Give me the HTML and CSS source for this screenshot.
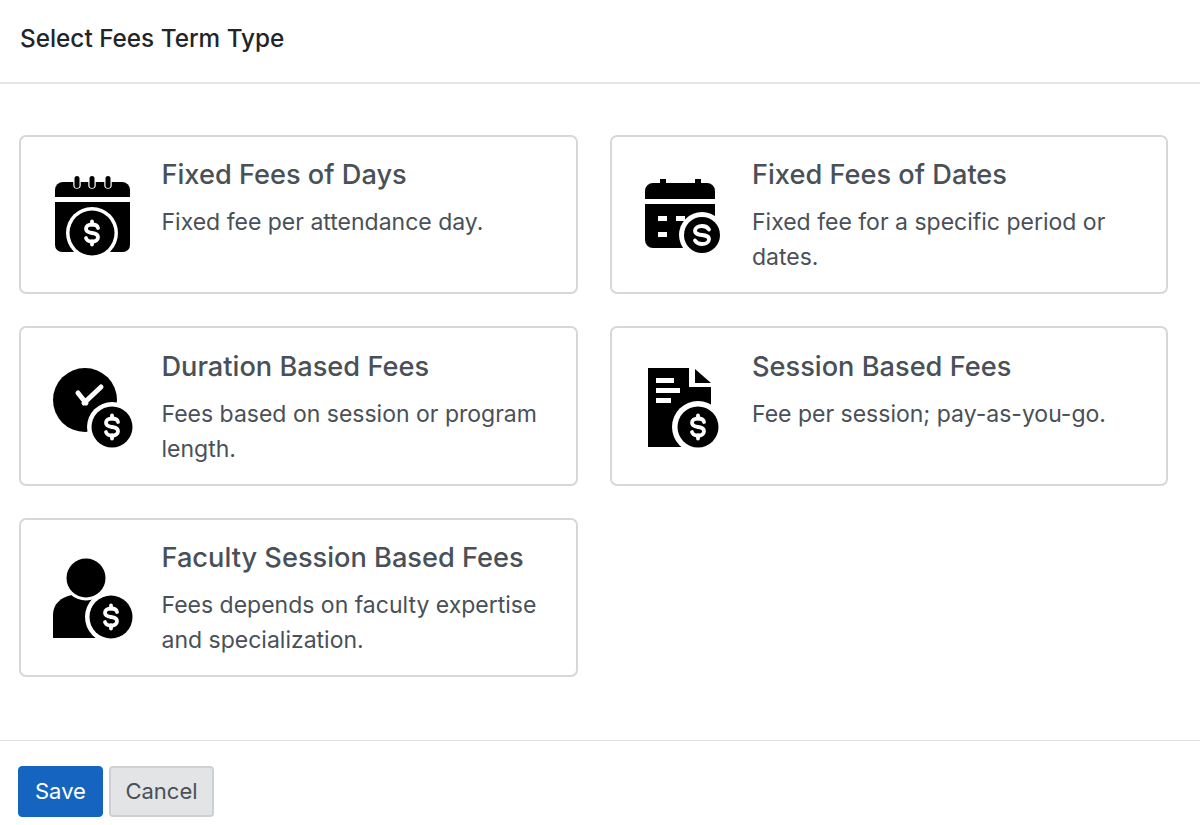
FILE: index.html
```html
<!DOCTYPE html>
<html lang="en">
<head>
  <meta charset="UTF-8">
  <title>Select Fees Term Type</title>
  <link rel="stylesheet" href="styles.css">
</head>
<body>

  <svg class="icon-defs" width="0" height="0" aria-hidden="true">
    <defs>
      <g id="dollar" fill="none" stroke="#fff" stroke-linecap="round">
        <path stroke-width="3.800" d="M6 -5C5.500 -7.500 3 -8.500 0 -8.500C-3.500 -8.500 -6 -6.800 -6 -4.200C-6 -1.200 -3 -.4 0 0C3 .4 6 1.200 6 4.200C6 6.800 3.500 8.500 0 8.500C-3 8.500 -5.500 7.500 -6 5"/>
        <path stroke-width="3.800" d="M0 -11.500V-8.500M0 8.500V11.500"/>
      </g>
    </defs>
  </svg>

  <header class="modal-header">
    <h2>Select Fees Term Type</h2>
  </header>

  <main class="modal-body">
    <div class="card">
      <svg class="card-icon" viewBox="0 0 90 90">
        <path d="M15 12H74A8 8 0 0 1 82 20V27H7V20A8 8 0 0 1 15 12Z"/>
        <path d="M7 32H82V75A7 7 0 0 1 75 82H14A7 7 0 0 1 7 75Z"/>
        <g stroke="#fff" stroke-width="7.500" stroke-linecap="round">
          <path d="M29 9V15M44 9V15M60 9V15"/>
        </g>
        <g stroke="#000" stroke-width="5" stroke-linecap="round">
          <path d="M29 8.500V15.500M44 8.500V15.500M60 8.500V15.500"/>
        </g>
        <circle cx="44" cy="63" r="26" fill="#fff"/>
        <circle cx="44" cy="63" r="22.500"/>
        <use href="#dollar" x="44" y="63" />
      </svg>
      <div class="card-text">
        <h3>Fixed Fees of Days</h3>
        <p>Fixed fee per attendance day.</p>
      </div>
    </div>

    <div class="card">
      <svg class="card-icon" viewBox="0 0 90 90">
        <path d="M21 9H27V13H56V9H62V13H68A8 8 0 0 1 76 21V29H6V21A8 8 0 0 1 14 13H21Z"/>
        <path d="M6 34H76V70A8 8 0 0 1 68 78H14A8 8 0 0 1 6 70Z"/>
        <g fill="#fff">
          <rect x="19" y="46" width="9" height="5"/>
          <rect x="37" y="46" width="9" height="5"/>
          <rect x="19" y="62" width="9" height="5"/>
        </g>
        <circle cx="63" cy="65" r="23" fill="#fff"/>
        <circle cx="63" cy="65" r="18"/>
        <path d="M70 59.500C68.500 57 66 56 63 56C59 56 56 58 56 60.800C56 64 59.500 64.500 63 65C66.500 65.500 70 66 70 69.200C70 72 67 74 63 74C60 74 57.500 73 56 70.500" fill="none" stroke="#fff" stroke-width="3.800" stroke-linecap="round"/>
      </svg>
      <div class="card-text">
        <h3>Fixed Fees of Dates</h3>
        <p>Fixed fee for a specific period or dates.</p>
      </div>
    </div>

    <div class="card">
      <svg class="card-icon" viewBox="0 0 90 90">
        <circle cx="37" cy="38" r="32"/>
        <path d="M30 31L38 41M53 25L36 41" fill="none" stroke="#fff" stroke-width="5" stroke-linecap="round"/>
        <circle cx="64" cy="65" r="25" fill="#fff"/>
        <circle cx="64" cy="65" r="20.500"/>
        <use href="#dollar" x="64" y="65" />
      </svg>
      <div class="card-text">
        <h3>Duration Based Fees</h3>
        <p>Fees based on session or program length.</p>
      </div>
    </div>

    <div class="card">
      <svg class="card-icon" viewBox="0 0 90 90">
        <path d="M9 6H50V25H72V85H9Z"/>
        <path d="M56 7L72 21H56Z"/>
        <g fill="#fff">
          <rect x="17" y="16" width="18" height="5"/>
          <rect x="17" y="26" width="24" height="5"/>
          <rect x="17" y="36" width="15" height="5"/>
        </g>
        <circle cx="59" cy="65" r="26" fill="#fff"/>
        <circle cx="59" cy="65" r="20.500"/>
        <use href="#dollar" x="59" y="65" />
      </svg>
      <div class="card-text">
        <h3>Session Based Fees</h3>
        <p>Fee per session; pay-as-you-go.</p>
      </div>
    </div>

    <div class="card">
      <svg class="card-icon" viewBox="0 0 90 90">
        <path d="M5 85V62C5 51 13 44 24 42H58V85Z"/>
        <circle cx="38" cy="25" r="22.500" fill="#fff"/>
        <circle cx="38" cy="25" r="19.500"/>
        <circle cx="63" cy="64" r="26" fill="#fff"/>
        <circle cx="63" cy="64" r="21.500"/>
        <use href="#dollar" x="63" y="64" />
      </svg>
      <div class="card-text">
        <h3>Faculty Session Based Fees</h3>
        <p>Fees depends on faculty expertise and specialization.</p>
      </div>
    </div>
  </main>

  <footer class="modal-footer">
    <button class="btn btn-save">Save</button>
    <button class="btn btn-cancel">Cancel</button>
  </footer>

</body>
</html>
```

FILE: styles.css
```css
body {
  margin: 0;
  height: 825px;
  overflow: hidden;
  font-family: Inter, "Liberation Sans", sans-serif;
  background: white;
  color: #212529;
}

.icon-defs {
  display: block;
  height: 0;
}

.modal-header {
  height: 82px;
  padding: 0 20px;
  display: flex;
  align-items: center;
  border-bottom: 2px solid #e3e5e7;
  box-sizing: content-box;
}

.modal-header h2 {
  margin: 0 0 7px;
  font-size: 24.300px;
  font-weight: 500;
}

.modal-body {
  height: 656px;
  padding: 50.900px 32px 0 19px;
  box-sizing: border-box;
  display: grid;
  grid-template-columns: 1fr 1fr;
  grid-auto-rows: 159.500px;
  gap: 32px;
  align-content: start;
}

.card {
  display: flex;
  align-items: flex-start;
  padding: 20.200px 27px 0;
  border: 2px solid #d5d8da;
  border-radius: 7px;
  box-sizing: border-box;
}

.card-icon {
  width: 90px;
  height: 90px;
  flex-shrink: 0;
  margin: 13px 23.500px 0 0;
}

.card-text h3 {
  margin: 0 0 12px;
  font-size: 27.200px;
  line-height: 36px;
  font-weight: 500;
  color: #495057;
}

.card-text p {
  margin: 0;
  font-size: 23px;
  line-height: 35px;
  color: #495057;
}

.modal-footer {
  height: 85px;
  padding: 25px 18px 0;
  box-sizing: border-box;
  border-top: 1px solid #dee2e6;
  display: flex;
  align-items: flex-start;
  gap: 6.500px;
}

.btn {
  height: 51px;
  padding: 0 16px 2px;
  font-family: inherit;
  font-size: 22px;
  border-radius: 4px;
  cursor: pointer;
}

.btn-save {
  background: #1565c0;
  color: white;
  border: 1px solid #1565c0;
}

.btn-cancel {
  padding: 0 14px 2px;
  background: #e2e4e6;
  color: #495057;
  border: 2px solid #ced1d4;
}
```
